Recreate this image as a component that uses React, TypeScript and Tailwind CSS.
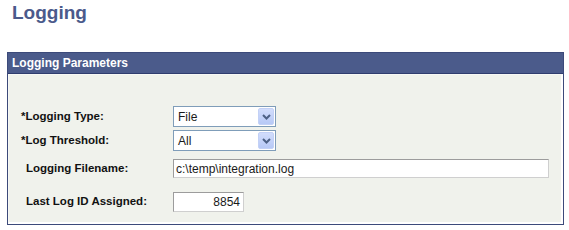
import React from 'react';

function Select({ value }: { value: string }) {
  return (
    <div className="flex items-center w-[103px] h-[21px] border border-[#7f9db9] bg-white">
      <span className="flex-1 pl-[4px] text-[12px] leading-none text-[#1a1a1a]">{value}</span>
      <div className="mr-[1px] w-[16px] h-[17px] rounded-[2px] bg-gradient-to-b from-[#d2ddfc] to-[#b7c9f6] border border-[#c3d1f6] flex items-center justify-center">
        <svg width="9" height="6" viewBox="0 0 9 6">
          <path d="M1 1l3.5 3.5L8 1" fill="none" stroke="#4d6185" strokeWidth="2" />
        </svg>
      </div>
    </div>
  );
}

function Label({ text, req }: { text: string; req?: boolean }) {
  return (
    <div className={`w-[164px] text-[11.5px] font-bold text-[#111] ${req ? 'pl-[12px]' : 'pl-[17px]'}`}>
      {req && '*'}
      {text}
    </div>
  );
}

export default function App() {
  return (
    <div className="w-[569px] h-[230px] bg-white font-['Liberation_Sans',Arial,sans-serif]">
      <h1 className="px-[12px] text-[19px] leading-[26px] font-bold text-[#4b5a8b]">Logging</h1>
      <div className="mt-[26px] ml-[7px] w-[557px] h-[173px] border border-[#3c4a7a] flex flex-col">
        <div className="h-[21px] bg-[#4b5b8b] border-b border-[#2f3d6e] flex items-center px-[4px] text-[12px] font-bold text-white">
          Logging Parameters
        </div>
        <div className="flex-1 bg-[#f0f2ec] border-l border-t border-r-2 border-b-2 border-l-[#f7f8f5] border-t-[#f7f8f5] border-r-white border-b-white pt-[31px]">
          <div className="flex items-center h-[21px]">
            <Label text="Logging Type:" req />
            <Select value="File" />
          </div>
          <div className="flex items-center h-[21px] mt-[3px]">
            <Label text="Log Threshold:" req />
            <Select value="All" />
          </div>
          <div className="flex items-center h-[19px] mt-[8px]">
            <Label text="Logging Filename:" />
            <div className="w-[376px] h-[19px] bg-white border border-t-[#9c9c9c] border-l-[#9c9c9c] border-r-[#cfcfcf] border-b-[#cfcfcf] flex items-center pl-[2px] text-[12px] text-[#1a1a1a]">
              c:\temp\integration.log
            </div>
          </div>
          <div className="flex items-center h-[20px] mt-[14px]">
            <Label text="Last Log ID Assigned:" />
            <div className="w-[71px] h-[20px] bg-white border border-t-[#9c9c9c] border-l-[#9c9c9c] border-r-[#cfcfcf] border-b-[#cfcfcf] flex items-center justify-end pr-[3px] text-[12px] text-[#1a1a1a]">
              8854
            </div>
          </div>
        </div>
      </div>
    </div>
  );
}
